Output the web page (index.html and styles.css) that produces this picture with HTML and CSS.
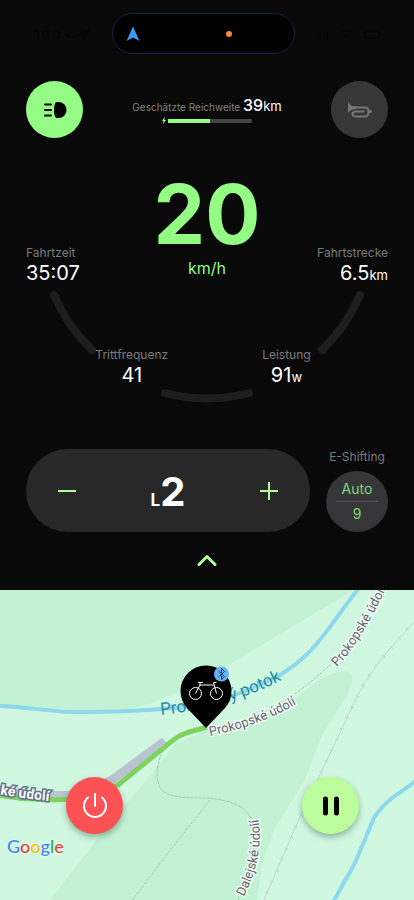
FILE: index.html
```html
<!DOCTYPE html>
<html lang="de">
<head>
    <meta charset="utf-8">
    <meta name="viewport" content="width=device-width, initial-scale=1">
    <title>Fahrt</title>
    <link rel="stylesheet" href="styles.css">
</head>
<body>
    <main class="app">
        <section class="dashboard">
            <div class="status-bar">
                <svg class="status-icons" viewBox="0 0 56 14" aria-hidden="true">
                    <path d="M1 5l3-2v9M9 4h5v7H9zM20 4h5v7h-5M31 4v4h5M35 4v8M45 8l9-5-4 9-1-4z" />
                </svg>
                <div class="island">
                    <svg class="nav-arrow" viewBox="0 0 14 16" aria-hidden="true">
                        <path d="M7 0.5L13.5 15 7 11.5 0.5 15z" />
                    </svg>
                    <span class="mic-dot"></span>
                </div>
                <svg class="status-icons" viewBox="0 0 72 14" aria-hidden="true">
                    <path d="M2 10v2M5 8v4M8 6v6M11 3v9M25 6q6-5 12 0M28 9q3-3 6 0M49 4h14v7H49zM66 6v3" />
                </svg>
            </div>

            <div class="top-row">
                <button type="button" class="round-button light-on" aria-label="Licht">
                    <svg width="24" height="18" viewBox="0 0 24 18">
                        <path d="M13 1h2.500a8 8 0 0 1 0 16H13c-1.500-2-2-4.500-2-8s.5-6 2-8z" />
                        <path class="beam" d="M2 3.500h6M2 9h6M2 14.500h6" />
                    </svg>
                </button>
                <div class="range">
                    <div class="range-text">Geschätzte Reichweite <strong>39</strong><span class="range-unit">km</span></div>
                    <div class="battery">
                        <svg width="4" height="7" viewBox="0 0 4 7" aria-hidden="true"><path d="M2.500 0L0 4h1.500L1 7l3-4H2.500z" /></svg>
                        <div class="battery-track"><div class="battery-level" style="width: 50%"></div></div>
                    </div>
                </div>
                <button type="button" class="round-button horn" aria-label="Hupe">
                    <svg width="25" height="18" viewBox="0 0 25 18">
                        <path class="bell" d="M1 1C3 4 5 5.500 9 5.500V8C6 8 3 9 1 12z" />
                        <path d="M5 6.500h13c2.500 0 3.500 1.500 3.500 4s-1 5-3.500 5H9c-2.500 0-3.500-1-3.500-2.500S6.500 10.500 9 10.500h8.500M21 9l3 1.500-3 1.500" />
                    </svg>
                </button>
            </div>

            <div class="gauge">
                <svg class="arcs" width="340" height="340" viewBox="0 0 340 340" aria-hidden="true">
                    <path d="M17 232A165 165 0 0 0 55 287" />
                    <path d="M128 330A165 165 0 0 0 212 330" />
                    <path d="M285 287A165 165 0 0 0 323 232" />
                </svg>
                <div class="main-readout">
                    <div class="stat">
                        <div class="label">Fahrtzeit</div>
                        <div class="value">35:07</div>
                    </div>
                    <div class="speed">
                        <div class="speed-value">20</div>
                        <div class="speed-unit">km/h</div>
                    </div>
                    <div class="stat stat-right">
                        <div class="label">Fahrtstrecke</div>
                        <div class="value">6.5<small>km</small></div>
                    </div>
                </div>
                <div class="lower-readout">
                    <div class="stat">
                        <div class="label">Trittfrequenz</div>
                        <div class="value">41</div>
                    </div>
                    <div class="stat">
                        <div class="label">Leistung</div>
                        <div class="value">91<small>w</small></div>
                    </div>
                </div>
            </div>

            <div class="controls">
                <div class="assist">
                    <button type="button" aria-label="Weniger Unterstützung">
                        <svg width="20" height="20" viewBox="0 0 20 20"><path d="M1 10h18" /></svg>
                    </button>
                    <div class="assist-level"><small>L</small>2</div>
                    <button type="button" aria-label="Mehr Unterstützung">
                        <svg width="20" height="20" viewBox="0 0 20 20"><path d="M1 10h18M10 1v18" /></svg>
                    </button>
                </div>
                <div class="shifting">
                    <div class="label" id="shift-label">E-Shifting</div>
                    <button type="button" class="shift-button" aria-describedby="shift-label">
                        <span>Auto</span>
                        <span class="gear">9</span>
                    </button>
                </div>
            </div>

            <button type="button" class="expand" aria-label="Mehr anzeigen">
                <svg width="20" height="14" viewBox="0 0 20 14"><path d="M2 11.500l8-8 8 8" /></svg>
            </button>
        </section>

        <section class="map">
            <svg class="map-canvas" viewBox="0 0 414 310" preserveAspectRatio="xMidYMid slice">
                <defs>
                    <path id="stream-name" d="M161 125C200 121 238 112 284 89" />
                    <path id="road-center" d="M210 146C240 140 270 130 300 112" />
                    <path id="road-top" d="M337 77C354 59 371 31 391 -12" />
                    <path id="road-south" d="M244 307C257 278 264 256 257 222" />
                    <path id="road-west" d="M-70 188Q-5 206 49 211" />
                </defs>

                <!-- forest -->
                <path class="forest" d="M0 0H354L225 77C180 104 140 124 80 124L0 118z" />
                <path class="forest" d="M50 310L110 233 150 186 175 154 207 140C250 135 285 118 315 93Q350 72 352 88C352 105 335 120 320 150L305 190 275 238 262 273 257 310z" />

                <!-- water -->
                <path class="water" d="M-2 116C25 116 45 122 75 122S130 122 160 119C210 117 240 105 280 85C315 64 325 42 358 -1" />
                <path class="water" d="M416 191L392 208Q380 218 374 228L354 275 333 312" />

                <!-- paths and railway -->
                <path class="trail" d="M207 140C250 132 285 117 330 75M163 160C156 175 155 192 162 200S188 208 210 208C230 211 244 215 251 228M238 310L243 300M210 210L168 263 131 312" />
                <path class="rail" d="M416 30C385 63 370 82 358 105L334 155 300 227 263 312" />
                <path class="rail ties" d="M416 30C385 63 370 82 358 105L334 155 300 227 263 312" />

                <!-- road and recorded track -->
                <path class="road" d="M-2 200C25 206 45 206 80 205L112 190 165 151" />
                <path class="track" d="M-2 205C30 211 55 210 80 209L118 195 172 151Q178 146 186 143L207 137" />

                <text class="stream-label"><textPath href="#stream-name">Prokopský potok</textPath></text>
                <text class="road-label"><textPath href="#road-center">Prokopské údolí</textPath></text>
                <text class="road-label"><textPath href="#road-top">Prokopské údolí</textPath></text>
                <text class="road-label"><textPath href="#road-south">Dalejské údolí</textPath></text>
                <text class="track-label" text-anchor="end"><textPath href="#road-west" startOffset="100%">Prokopské údolí</textPath></text>

                <!-- bike position -->
                <path d="M206 138L187 118A25.500 25.500 0 1 1 225 118z" />
                <g class="bike">
                    <circle cx="195.500" cy="103.500" r="6" />
                    <circle cx="216.500" cy="103.500" r="6" />
                    <path d="M195.500 103.500L200 95H214M198 92.500h5M200 95v-2.500M216.500 103.500L213.500 92.500h3" />
                </g>
                <circle class="bt-badge" cx="221.500" cy="84" r="7.500" />
                <path class="bt-sign" d="M218.500 81l6 5.500-3 3v-11l3 3-6 5.500" />
            </svg>

            <a class="google" href="#"><span class="blue">G</span><span class="red">o</span><span class="yellow">o</span><span class="blue">g</span><span class="green">l</span><span class="red">e</span></a>

            <div class="ride-actions">
                <button type="button" class="round-button stop" aria-label="Fahrt beenden">
                    <svg width="28" height="28" viewBox="0 0 28 28"><path d="M14 2v12M7 5.500a11 11 0 1 0 14 0" /></svg>
                </button>
                <button type="button" class="round-button pause" aria-label="Pause">
                    <svg width="18" height="20" viewBox="0 0 18 20"><path d="M3.500 3v14M14.500 3v14" /></svg>
                </button>
            </div>
        </section>
    </main>
</body>
</html>
```

FILE: styles.css
```css
* {
    box-sizing: border-box;
}
body {
    margin: 0;
    background: #090909;
    color: #fff;
    font-family: Inter, "Liberation Sans", sans-serif;
}
button {
    padding: 0;
    border: 0;
    background: none;
    color: inherit;
    font: inherit;
    cursor: pointer;
}
svg {
    display: block;
}
.app {
    display: flex;
    flex-direction: column;
    min-height: 100vh;
}
.dashboard {
    padding: 13px 26px 0;
}

/* status bar */
.status-bar {
    display: flex;
    align-items: center;
    justify-content: space-between;
    padding-left: 8px;
}
.status-icons {
    height: 14px;
    fill: none;
    stroke: #050505;
    stroke-width: 2;
}
.island {
    display: flex;
    align-items: center;
    justify-content: space-between;
    width: 183px;
    height: 41px;
    padding: 0 62px 0 13px;
    border: 1px solid #0d2948;
    border-radius: 21px;
    background: #000;
}
.nav-arrow {
    width: 14px;
    height: 16px;
    fill: #3c9bf5;
}
.mic-dot {
    width: 6px;
    height: 6px;
    border-radius: 50%;
    background: #f58b35;
}

/* light, range, horn */
.top-row {
    display: flex;
    align-items: center;
    justify-content: space-between;
    margin-top: 27px;
}
.round-button {
    display: flex;
    align-items: center;
    justify-content: center;
    width: 57px;
    height: 57px;
    border-radius: 50%;
}
.light-on {
    background: #94fc85;
}
.light-on .beam {
    fill: none;
    stroke: #000;
    stroke-width: 2;
    stroke-linecap: round;
}
.horn {
    background: #373737;
}
.horn svg {
    fill: none;
    stroke: #777;
    stroke-width: 2;
}
.horn .bell {
    fill: #777;
    stroke: none;
}
.range-text {
    color: #828282;
    font-size: 10px;
    line-height: 20px;
    white-space: nowrap;
}
.range-text strong {
    color: #fff;
    font-size: 16px;
    font-weight: 500;
}
.range-unit {
    color: #fff;
    font-size: 13px;
}
.battery {
    display: flex;
    align-items: center;
    justify-content: center;
    gap: 2px;
}
.battery svg {
    fill: #94fc85;
}
.battery-track {
    width: 84px;
    height: 4px;
    border-radius: 1px;
    background: #444;
}
.battery-level {
    height: 100%;
    background: #94fc85;
}

/* speed and ride data */
.gauge {
    position: relative;
    padding-top: 36px;
}
.arcs {
    position: absolute;
    bottom: -16px;
    left: 50%;
    margin-left: -170px;
    fill: none;
    stroke: #1e1e1e;
    stroke-width: 8;
    stroke-linecap: round;
}
.main-readout {
    position: relative;
    display: grid;
    grid-template-columns: 1fr auto 1fr;
    align-items: end;
}
.label {
    color: #7c7c7c;
    font-size: 12px;
    line-height: 16px;
    white-space: nowrap;
}
.value {
    font-size: 20px;
    line-height: 24px;
}
.value small {
    font-size: 13px;
    line-height: 16px;
}
.stat-right {
    justify-self: end;
    text-align: right;
}
.speed {
    text-align: center;
}
.speed-value {
    color: #94fc85;
    font-size: 82px;
    font-weight: 700;
    line-height: 82px;
}
.speed-unit {
    color: #94fc85;
    font-size: 16px;
    line-height: 24px;
    padding-bottom: 5px;
}
.lower-readout {
    position: relative;
    display: flex;
    justify-content: center;
    gap: 94px;
    margin-top: 62px;
    padding-right: 8px;
    text-align: center;
}

/* assist level and shifting */
.controls {
    display: flex;
    align-items: flex-end;
    gap: 16px;
    margin-top: 62px;
}
.assist {
    flex: 1;
    display: flex;
    align-items: center;
    justify-content: space-between;
    height: 83px;
    padding: 0 21px;
    border-radius: 42px;
    background: #282828;
}
.assist button {
    padding: 10px;
}
.assist svg {
    stroke: #b4fb9c;
    stroke-width: 2;
}
.assist-level {
    padding-top: 10px;
    font-size: 40px;
    font-weight: 700;
    line-height: 48px;
}
.assist-level small {
    font-size: 17px;
}
.shifting {
    width: 62px;
    text-align: center;
}
.shifting .label {
    margin: 0 -8px 6px;
}
.shift-button {
    display: block;
    width: 62px;
    height: 61px;
    padding: 0 10px;
    border-radius: 50%;
    background: #363639;
    color: #7ad873;
    font-size: 14px;
    line-height: 24px;
}
.shift-button span {
    display: block;
}
.shift-button .gear {
    border-top: 1px solid #555558;
}
.expand {
    display: block;
    margin: 0 auto;
    padding: 21px 20px 23px;
}
.expand svg {
    fill: none;
    stroke: #b4fb9c;
    stroke-width: 3;
    stroke-linecap: round;
    stroke-linejoin: round;
}

/* map */
.map {
    position: relative;
    flex: 1;
    min-height: 310px;
    overflow: hidden;
    background: #d0f8e1;
}
.map-canvas {
    position: absolute;
    width: 100%;
    height: 100%;
    font-family: Roboto, sans-serif;
}
.forest {
    fill: #c2f1d4;
}
.water,
.trail,
.rail,
.road,
.track {
    fill: none;
}
.water {
    stroke: #8dd8ec;
    stroke-width: 4;
}
.trail {
    stroke: #a3c8b5;
    stroke-width: 1;
    stroke-dasharray: 3 1;
}
.rail {
    stroke: #bcd8c9;
    stroke-width: 1;
}
.ties {
    stroke-width: 4;
    stroke-dasharray: 1 11;
}
.road {
    stroke: #b8c5d0;
    stroke-width: 9;
    stroke-linejoin: round;
}
.track {
    stroke: #80d25f;
    stroke-width: 5;
    stroke-linejoin: round;
}
.stream-label {
    fill: #218ba2;
    font-size: 17px;
}
.road-label {
    fill: #66616d;
    font-size: 13px;
    stroke: #eefaf3;
    stroke-width: 3;
    paint-order: stroke;
}
.track-label {
    fill: #fff;
    font-size: 14px;
    font-weight: 700;
    stroke: #66718a;
    stroke-width: 3;
    paint-order: stroke;
}
.bike {
    fill: none;
    stroke: #fff;
    stroke-width: 1;
}
.bt-badge {
    fill: #69b1f0;
}
.bt-sign {
    fill: none;
    stroke: #12406e;
    stroke-width: 1;
}
.google {
    position: absolute;
    bottom: 42px;
    left: 7px;
    font-family: Lato, sans-serif;
    font-size: 18px;
    font-weight: 500;
    line-height: 24px;
    text-decoration: none;
    text-shadow: 0 0 2px #fff;
}
.blue {
    color: #4285f4;
}
.red {
    color: #ea4335;
}
.yellow {
    color: #fbbc05;
}
.green {
    color: #34a853;
}
.ride-actions {
    position: absolute;
    right: 55px;
    bottom: 66px;
    left: 66px;
    display: flex;
    justify-content: space-between;
}
.stop,
.pause {
    box-shadow: 0 3px 6px rgba(0, 50, 20, 0.35);
}
.stop {
    background: #fc5255;
}
.stop svg {
    fill: none;
    stroke: #fff;
    stroke-width: 2;
    stroke-linecap: round;
}
.pause {
    background: #bcfc9c;
}
.pause svg {
    stroke: #000;
    stroke-width: 5;
    stroke-linecap: round;
}
```
